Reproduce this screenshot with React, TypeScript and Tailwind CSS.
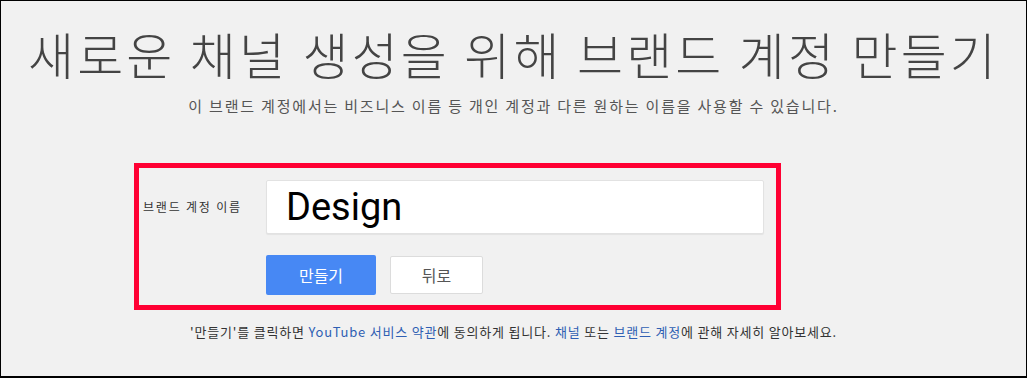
export default function App() {
  return (
    <div className="w-[1027px] h-[378px] bg-[#f1f1f1] border border-b-2 border-black font-['Noto_Sans_CJK_KR',sans-serif] overflow-hidden">
      {/* heading */}
      <h1 className="mt-[20px] text-center text-[50px] leading-[64px] font-light tracking-[3.2px] text-[#444]">
        새로운 채널 생성을 위해 브랜드 계정 만들기
      </h1>
      <p className="mt-[11px] text-center text-[15px] leading-[20px] tracking-[1.8px] text-[#555]">
        이 브랜드 계정에서는 비즈니스 이름 등 개인 계정과 다른 원하는 이름을 사용할 수 있습니다.
      </p>

      {/* form box */}
      <div className="ml-[133px] mt-[47px] w-[647px] h-[147px] border-[5px] border-[#ff0033] pt-[12px]">
        <div className="flex items-center">
          <label className="ml-[4px] w-[123px] text-[12px] text-[#333] tracking-[1.8px]">
            브랜드 계정 이름
          </label>
          <div className="w-[498px] h-[54px] bg-white border border-[#e2e2e2] rounded-[2px] shadow-[0_1px_1px_rgba(0,0,0,0.06)] flex items-center pl-[19px]">
            <span className="font-['Roboto',sans-serif] text-[38px] text-black">Design</span>
          </div>
        </div>
        <div className="flex items-center gap-[14px] ml-[127px] mt-[21px]">
          <button className="w-[110px] h-[40px] bg-[#4788f4] rounded-[2px] text-white text-[16px]">
            만들기
          </button>
          <button className="w-[93px] h-[38px] bg-white border border-[#dcdcdc] rounded-[2px] text-[#555] text-[16px]">
            뒤로
          </button>
        </div>
      </div>

      {/* footer */}
      <p className="mt-[12px] text-center text-[13px] tracking-[0.8px] text-[#333]">
        '만들기'를 클릭하면 <a className="text-[#2f5fb3]">YouTube 서비스 약관</a>에 동의하게 됩니다.{" "}
        <a className="text-[#2f5fb3]">채널</a> 또는 <a className="text-[#2f5fb3]">브랜드 계정</a>에 관해 자세히 알아보세요.
      </p>
    </div>
  );
}
